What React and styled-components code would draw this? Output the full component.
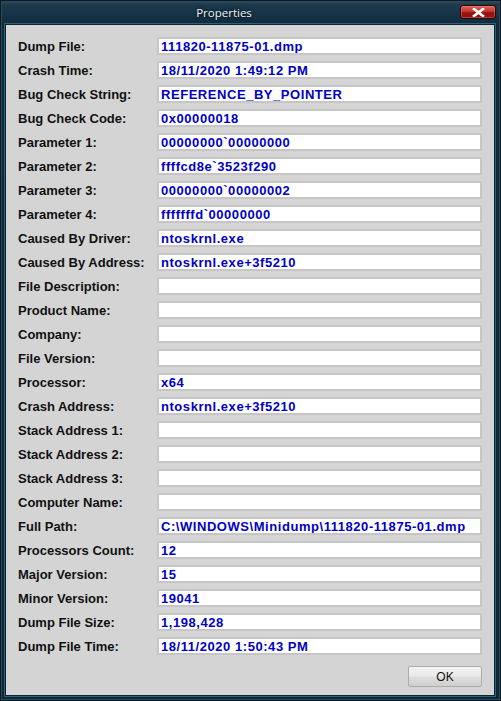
import React from "react";
import styled, { createGlobalStyle } from "styled-components";

const Global = createGlobalStyle`
  html, body { margin: 0; padding: 0; background: #0f2636; }
  #root { width: 501px; height: 701px; }
`;

const Window = styled.div`
  width: 501px;
  height: 701px;
  box-sizing: border-box;
  display: flex;
  flex-direction: column;
  background: linear-gradient(#34505f 0px, #1f3b4d 3px, #18344a 12px, #0f2a3a 25px, #0f2838 100%);
  border: 1px solid #0a1a24;
  box-shadow: inset 0 0 0 1px #2a4a5c;
  padding: 0 6px 5px 5px;
`;

const TitleBar = styled.div`
  height: 24px;
  display: flex;
  align-items: center;
  position: relative;
`;

const Title = styled.div`
  flex: 1;
  text-align: center;
  padding-right: 52px;
  font-family: "Open Sans", "Noto Sans", sans-serif;
  font-size: 11.5px;
  color: #eef3f6;
  text-shadow: 0 0 4px #0b1a24, 0 0 2px #0b1a24;
  padding-bottom: 1px;
`;

const CloseButton = styled.div`
  position: absolute;
  right: -2px;
  top: 4px;
  width: 36px;
  height: 14px;
  box-sizing: border-box;
  border: 1px solid #2a0606;
  border-radius: 3px;
  background: linear-gradient(#d9655c 0%, #c2342c 45%, #9c1411 55%, #8e1010 100%);
  box-shadow: inset 0 0 0 1px rgba(255, 160, 150, 0.35);
  display: flex;
  align-items: center;
  justify-content: center;
`;

const Client = styled.div`
  flex: 1;
  background: #d4d4d4;
  box-shadow: 0 0 0 1px #0c2230, 0 0 0 2px #2c6378;
  display: flex;
  flex-direction: column;
  padding: 12px 12px 8px 12px;
  box-sizing: border-box;
`;

const Grid = styled.div`
  display: grid;
  grid-template-columns: 139px 1fr;
  row-gap: 6px;
`;

const Label = styled.div`
  height: 18px;
  display: flex;
  align-items: center;
  font-family: "Liberation Sans", Arial, sans-serif;
  font-weight: bold;
  font-size: 13px;
  color: #111;
`;

const Value = styled.div`
  height: 18px;
  box-sizing: border-box;
  border: 2px solid #c6c6c6;
  background: #fff;
  display: flex;
  align-items: center;
  padding-left: 2px;
  font-family: "Liberation Sans", Arial, sans-serif;
  font-weight: bold;
  font-size: 13px;
  letter-spacing: 0.55px;
  color: #0000c4;
  white-space: nowrap;
  overflow: hidden;
`;

const Footer = styled.div`
  margin-top: auto;
  display: flex;
  justify-content: flex-end;
`;

const Button = styled.div`
  width: 74px;
  height: 21px;
  box-sizing: border-box;
  border: 1px solid #acacac;
  border-radius: 2px;
  background: linear-gradient(#f2f2f2 0%, #ebebeb 45%, #dddddd 55%, #cfcfcf 100%);
  display: flex;
  align-items: center;
  justify-content: center;
  font-family: "Liberation Sans", Arial, sans-serif;
  font-size: 12px;
  color: #111;
`;

const rows = [
  ["Dump File:", "111820-11875-01.dmp"],
  ["Crash Time:", "18/11/2020 1:49:12 PM"],
  ["Bug Check String:", "REFERENCE_BY_POINTER"],
  ["Bug Check Code:", "0x00000018"],
  ["Parameter 1:", "00000000`00000000"],
  ["Parameter 2:", "ffffcd8e`3523f290"],
  ["Parameter 3:", "00000000`00000002"],
  ["Parameter 4:", "fffffffd`00000000"],
  ["Caused By Driver:", "ntoskrnl.exe"],
  ["Caused By Address:", "ntoskrnl.exe+3f5210"],
  ["File Description:", ""],
  ["Product Name:", ""],
  ["Company:", ""],
  ["File Version:", ""],
  ["Processor:", "x64"],
  ["Crash Address:", "ntoskrnl.exe+3f5210"],
  ["Stack Address 1:", ""],
  ["Stack Address 2:", ""],
  ["Stack Address 3:", ""],
  ["Computer Name:", ""],
  ["Full Path:", "C:\\WINDOWS\\Minidump\\111820-11875-01.dmp"],
  ["Processors Count:", "12"],
  ["Major Version:", "15"],
  ["Minor Version:", "19041"],
  ["Dump File Size:", "1,198,428"],
  ["Dump File Time:", "18/11/2020 1:50:43 PM"],
];

export default function App() {
  return (
    <>
      <Global />
      <Window>
        <TitleBar>
          <Title>Properties</Title>
          <CloseButton>
            <svg width="13" height="9" viewBox="0 0 13 9">
              <path d="M2 1 L11 8 M11 1 L2 8" stroke="#fff" strokeWidth="2.6" strokeLinecap="square" />
            </svg>
          </CloseButton>
        </TitleBar>
        <Client>
          <Grid>
            {rows.map(([l, v]) => (
              <React.Fragment key={l}>
                <Label>{l}</Label>
                <Value>{v}</Value>
              </React.Fragment>
            ))}
          </Grid>
          <Footer>
            <Button>OK</Button>
          </Footer>
        </Client>
      </Window>
    </>
  );
}
